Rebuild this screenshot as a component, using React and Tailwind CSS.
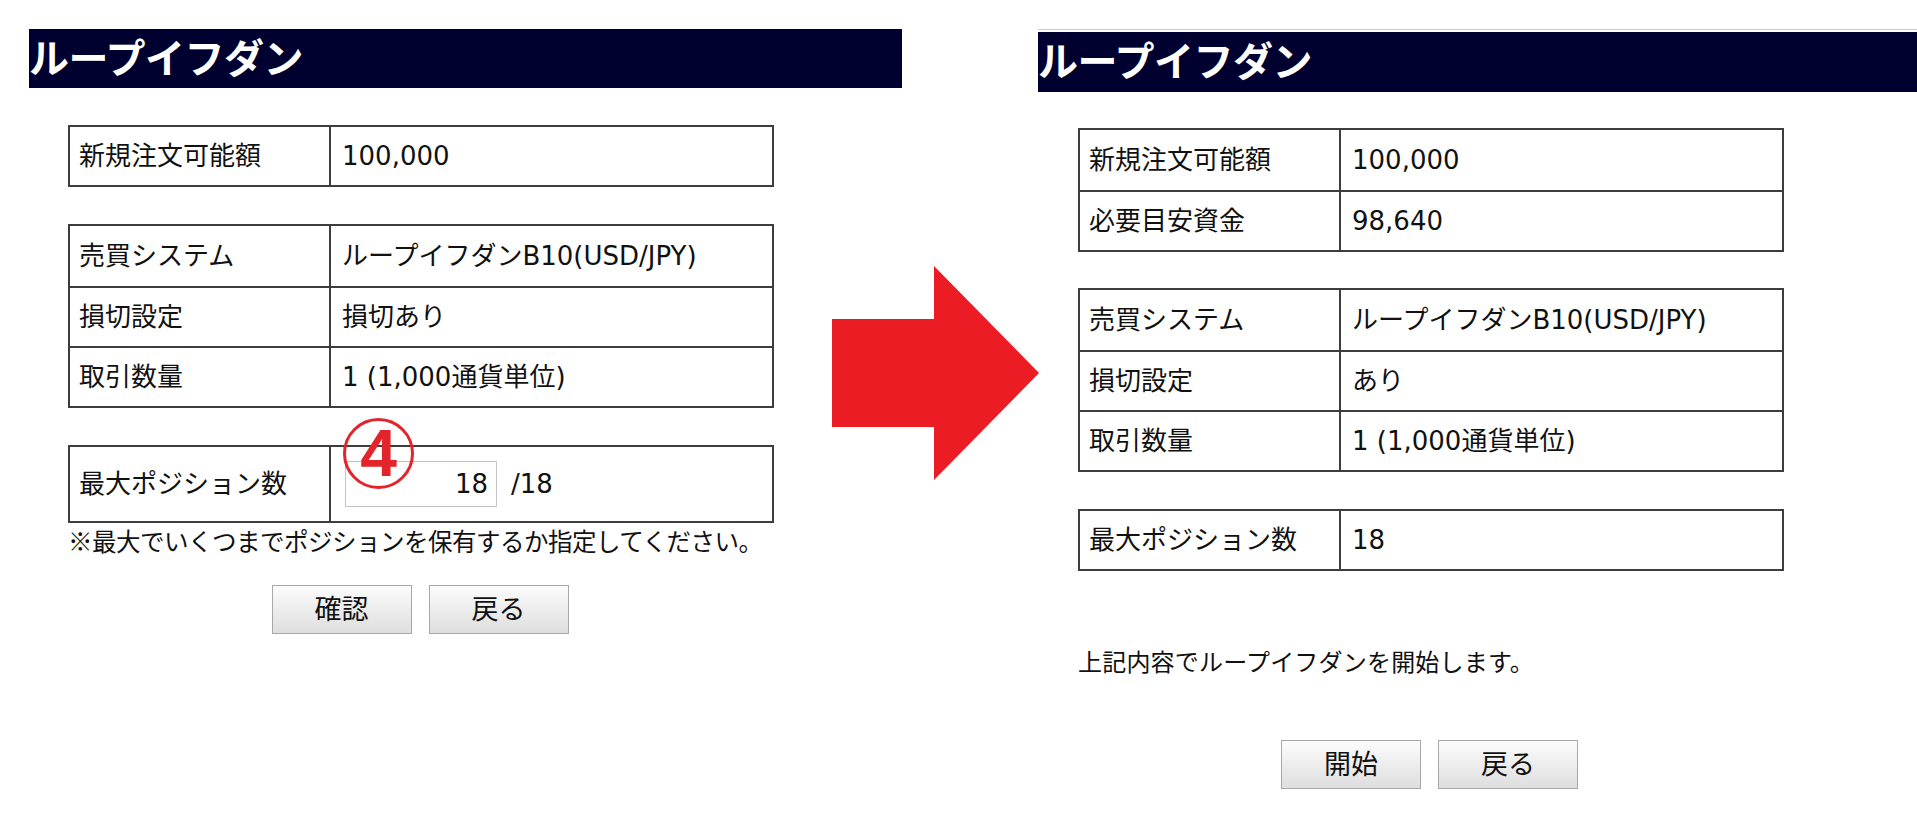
import clsx from 'clsx'

const line = 'border-[#3d3d3d]'

function InfoTable({ rows, rowClass = 'h-[60px]' }) {
  return (
    <div className={clsx('w-[706px] border-2', line)}>
      {rows.map((r, i) => (
        <div key={r[0]} className={clsx('flex', rowClass, i > 0 && 'border-t-2 ' + line)}>
          <div className={clsx('w-[261px] shrink-0 border-r-2 pl-[9px] flex items-center', line)}>{r[0]}</div>
          <div className="relative flex-1 pl-[11px] flex items-center">{r[1]}</div>
        </div>
      ))}
    </div>
  )
}

function Btn({ children }) {
  return (
    <button className="w-[140px] h-[49px] border border-[#a8a8a8] bg-gradient-to-b from-[#fcfcfc] to-[#dedede] text-[27px] leading-none text-[#111]">
      {children}
    </button>
  )
}

function TitleBar({ className }) {
  return (
    <div className={clsx('bg-[#000030] text-white font-bold text-[40px] leading-none tracking-[-0.5px] flex items-center', className)}>
      ループイフダン
    </div>
  )
}

function Arrow() {
  return (
    <svg width="208" height="214" viewBox="0 0 208 214" className="shrink-0">
      <polygon points="1,53 103,53 103,0 208,107 103,214 103,161 1,161" fill="#ec1c24" />
    </svg>
  )
}

export default function App() {
  const maxPos = (
    <>
      <div className="absolute left-[12px] top-[-29px] w-[71px] h-[71px] rounded-full border-[3px] border-[#e3242b] flex items-center justify-center">
        <span className="text-[#e3242b] font-bold text-[66px] leading-none font-['Liberation_Sans',sans-serif] mt-[-2px]">4</span>
      </div>
      <input
        readOnly
        value="18"
        className="ml-[3px] w-[152px] h-[46px] border border-[#c4c4c4] bg-transparent text-right pr-[8px] text-[26px] text-[#111] outline-none"
      />
      <span className="ml-[14px]">/18</span>
    </>
  )

  return (
    <div className="w-[1917px] h-[815px] bg-white flex text-[#111] text-[26px] leading-none font-['DejaVu_Sans','Noto_Sans_CJK_JP',sans-serif] overflow-hidden">
      {/* before */}
      <div className="w-[1038px] shrink-0 pl-[29px] pt-[29px]">
        <TitleBar className="w-[873px] h-[59px]" />
        <div className="flex">
          <div className="ml-[39px] w-[706px] pt-[37px]">
            <InfoTable rows={[['新規注文可能額', '100,000']]} rowClass="h-[58px]" />
            <div className="mt-[37px]">
              <InfoTable
                rows={[
                  ['売買システム', 'ループイフダンB10(USD/JPY)'],
                  ['損切設定', '損切あり'],
                  ['取引数量', '1 (1,000通貨単位)'],
                ]}
              />
            </div>
            <div className="mt-[37px]">
              <InfoTable rows={[['最大ポジション数', maxPos]]} rowClass="h-[74px]" />
            </div>
            <p className="text-[24.5px] leading-[36px] tracking-[-0.5px] whitespace-nowrap font-['Noto_Sans_CJK_JP',sans-serif]">
              ※最大でいくつまでポジションを保有するか指定してください。
            </p>
            <div className="mt-[26px] flex justify-center gap-[17px] pr-[2px]">
              <Btn>確認</Btn>
              <Btn>戻る</Btn>
            </div>
          </div>
          <div className="ml-[57px] mt-[178px]">
            <Arrow />
          </div>
        </div>
      </div>

      {/* after */}
      <div className="flex-1 pt-[29px]">
        <div className="border-t border-[#c8c8c8] pt-[2px]">
          <TitleBar className="h-[60px]" />
        </div>
        <div className="ml-[40px] w-[708px] pt-[36px]">
          <InfoTable
            rows={[
              ['新規注文可能額', '100,000'],
              ['必要目安資金', '98,640'],
            ]}
          />
          <div className="mt-[36px]">
            <InfoTable
              rows={[
                ['売買システム', 'ループイフダンB10(USD/JPY)'],
                ['損切設定', 'あり'],
                ['取引数量', '1 (1,000通貨単位)'],
              ]}
            />
          </div>
          <div className="mt-[37px]">
            <InfoTable rows={[['最大ポジション数', '18']]} rowClass="h-[58px]" />
          </div>
          <p className="mt-[72px] text-[24px] leading-[36px] tracking-[0.2px] whitespace-nowrap font-['Noto_Sans_CJK_JP',sans-serif]">
            上記内容でループイフダンを開始します。
          </p>
          <div className="mt-[61px] flex justify-center gap-[17px] pr-[5px]">
            <Btn>開始</Btn>
            <Btn>戻る</Btn>
          </div>
        </div>
      </div>
    </div>
  )
}
